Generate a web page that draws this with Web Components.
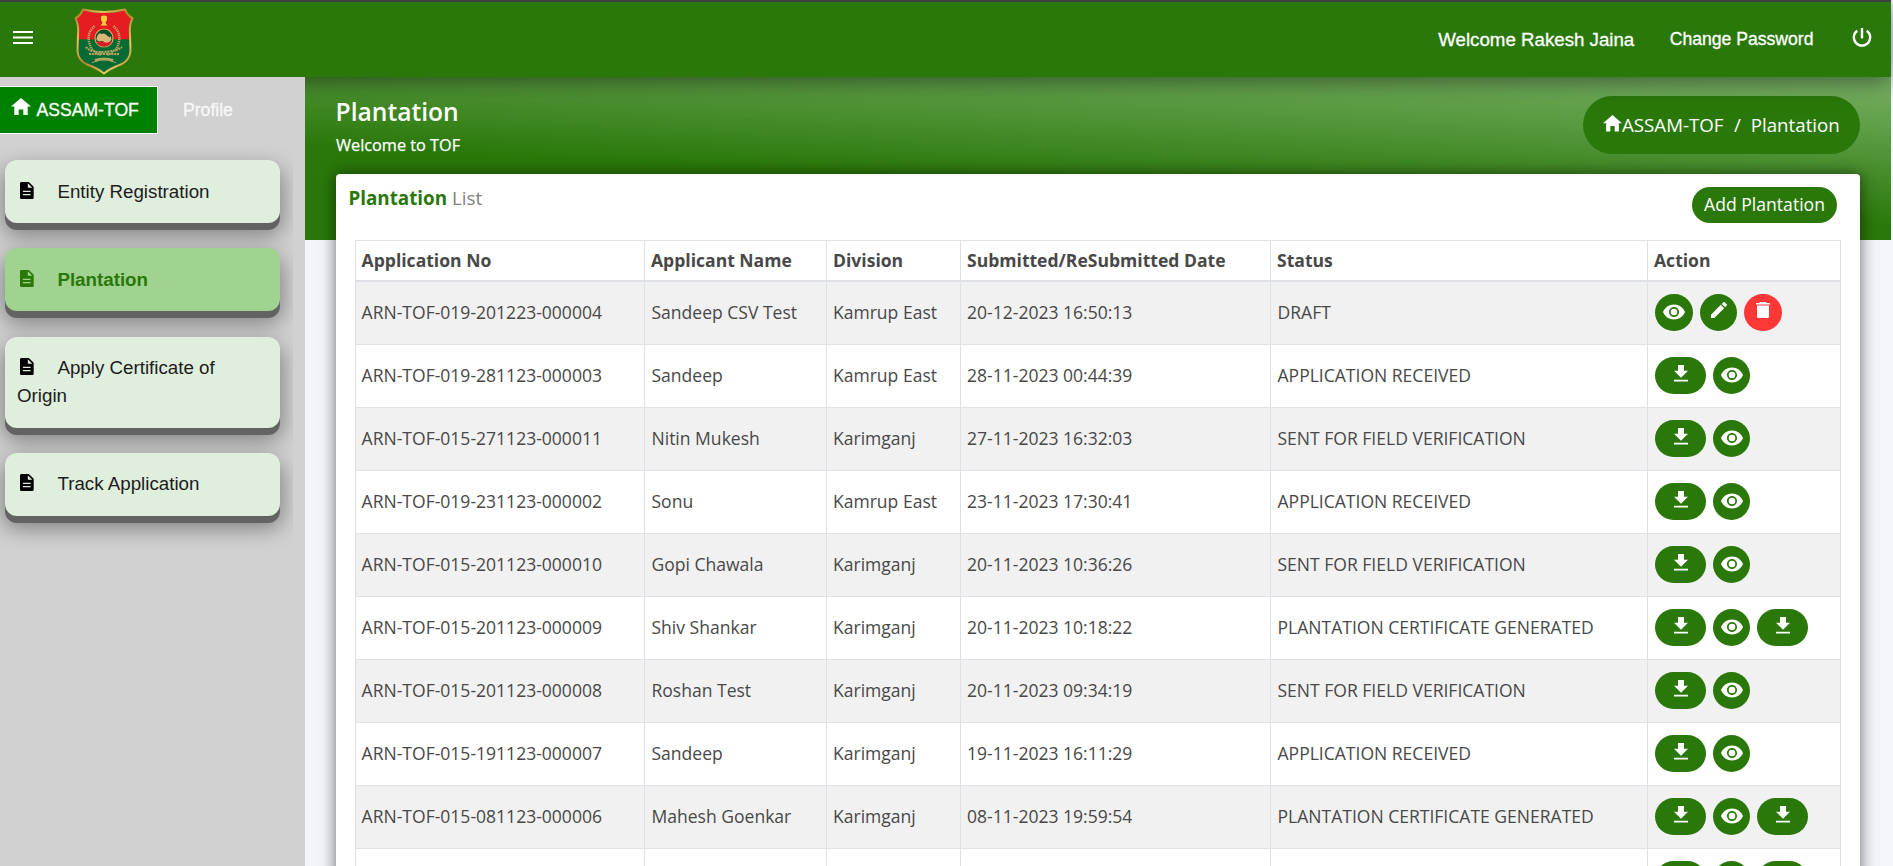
<!DOCTYPE html>
<html lang="en">
<head>
<meta charset="utf-8">
<title>Plantation</title>
<style>
html,body{margin:0;height:100%;overflow:hidden}
body{font-family:"Open Sans","Noto Sans",sans-serif;background:#f4f5fa;color:#484848;--green:#2a780a}
</style>
</head>
<body>
<tof-app></tof-app>
<script>
const UI = '"Liberation Sans",Arial,sans-serif';
const define = (name, css, html, setup) => customElements.define(name, class extends HTMLElement {
  connectedCallback() {
    if (this.shadowRoot) return;
    const root = this.attachShadow({mode: 'open'});
    root.innerHTML = `<style>*{box-sizing:border-box}${css}</style>` + (typeof html === 'function' ? html(this) : html);
    if (setup) setup(this, root);
  }
});

const ICONS = {
  home: ['0 0 20 17', '<path d="M7.7 17v-5.6h4.6V17h4.4V8.6H20L10 0 0 8.6h3.3V17z"/>'],
  menu: ['0 0 20 13', '<path d="M0 0h20v2H0zM0 5.5h20v2H0zM0 11h20v2H0z"/>'],
  doc: ['0 0 14 17', '<path fill-rule="evenodd" d="M1.6 0H9l5 4.8v10.6c0 1-.7 1.6-1.6 1.6H1.6C.7 17 0 16.400 0 15.400V1.600C0 .7.7 0 1.600 0zM8 1.300v4.400h4.600zM3 8.700V10h7.800V8.700zM3 12v1.300h7.800V12z"/>'],
  power: ['0 0 20 19', '<path d="M8.800 0h2.400v10.400H8.800z"/><path d="M5.300 2.700A8.200 8.200 0 1 0 14.700 2.700" fill="none" stroke="currentColor" stroke-width="2.300"/>'],
  eye: ['0 0 24 24', '<path fill-rule="evenodd" d="M12 4.500C7 4.500 2.730 7.610 1 12c1.730 4.390 6 7.500 11 7.500s9.270-3.110 11-7.500c-1.730-4.390-6-7.500-11-7.500zM12 17c-2.760 0-5-2.240-5-5s2.240-5 5-5 5 2.240 5 5-2.240 5-5 5zm0-8.300a3.300 3.300 0 1 0 0 6.600 3.300 3.300 0 0 0 0-6.600z"/>'],
  download: ['0 0 24 24', '<path d="M19 9h-4V3H9v6H5l7 7 7-7zM5 18v2h14v-2H5z"/>'],
  edit: ['3 3 18 18', '<path d="M3 17.250V21h3.750L17.810 9.940l-3.750-3.750L3 17.250zM20.710 7.040a1 1 0 0 0 0-1.410l-2.340-2.340a1 1 0 0 0-1.410 0l-1.830 1.830 3.750 3.750 1.830-1.830z"/>'],
  trash: ['0 0 14 16.400', '<path d="M4 0h6l.7.900H14v1.500H0V.900h3.300zM1 3.600h12v10.900c0 1.100-.8 1.900-1.900 1.900H2.900C1.800 16.400 1 15.600 1 14.500z"/>']
};
define('tof-icon', ':host{display:inline-block;line-height:0}svg{display:block;width:100%;height:100%;fill:currentColor}',
  el => { const [vb, p] = ICONS[el.getAttribute('name')]; return `<svg viewBox="${vb}" preserveAspectRatio="none">${p}</svg>`; });

define('tof-crest', ':host{display:block;width:60px;height:67px}svg{display:block;width:100%;height:100%}', `
<svg viewBox="0 0 60 67">
  <defs>
    <linearGradient id="gold" x1="0" x2="1" y1="0" y2="1"><stop offset="0" stop-color="#a8741c"/><stop offset=".25" stop-color="#e3c062"/><stop offset=".5" stop-color="#b4832a"/><stop offset=".75" stop-color="#e8c96a"/><stop offset="1" stop-color="#9c6c1c"/></linearGradient>
    <clipPath id="sh"><path d="M9.500 2.500Q30 7.500 50.500 2.500Q52.500 8 57.300 10.500Q54 17 55 27L55.500 43Q55 51 47 55.500Q35 60 30 64.500Q25 60 13 55.500Q5 51 4.500 43L5 27Q6 17 2.700 10.500Q7.500 8 9.500 2.500Z"/></clipPath>
  </defs>
  <g clip-path="url(#sh)"><path fill="#e61c22" d="M0 0h60v31.500H0z"/><path fill="#066a34" d="M0 31.500h60V67H0z"/></g>
  <path fill="none" stroke="url(#gold)" stroke-width="2" stroke-linejoin="round" d="M9 1.500Q30 6.500 51 1.500Q53.500 7.500 58.500 10.200Q55 17 56 27L56.500 43Q56 51.500 48 56Q35 61 30 65.500Q25 61 12 56Q4 51.500 3.500 43L4 27Q5 17 1.500 10.200Q6.500 7.500 9 1.500Z"/>
  <path fill="#f2cf3c" d="M27 8.500q3-2 6 0v4l-1.200 1v2l1.700 2h-7l1.700-2v-2l-1.200-1z"/>
  <circle cx="30" cy="30" r="9" fill="#064f2c" stroke="#d9ab5c" stroke-width="1.200"/>
  <path fill="#d7202a" d="M22 33.500h16q-2.500 5-8 5t-8-5z"/>
  <path fill="#d9b877" d="M22.500 32q0-5 3.500-7l1 1q4-1.500 6 1.500l3 2 .7-2 .8 4-2 2.500-4 .7-3-1.700h-2l-1 .4z"/>
  <path fill="none" stroke="#c2a25c" stroke-width="2.400" stroke-dasharray="1.300 .8" d="M20.500 18Q9.500 28 19 43M39.500 18Q50.500 28 41 43"/>
  <path fill="none" stroke="#b3a45e" stroke-width="2.200" stroke-dasharray="2 .8" d="M12 39q5 6 18 5t18-5M15 46h30"/>
  <path fill="none" stroke="#b3a45e" stroke-width="1.200" d="M20 42l4 5M40 42l-4 5M26 43v5M34 43v5"/>
  <path fill="none" stroke="#b3a45e" stroke-width="3" d="M21 52.500q9-3 18 0"/><path stroke="#b3a45e" d="M18 54.500l5-1.500M42 54.500L37 53"/>
</svg>`);

define('tof-header', `
:host{display:flex;align-items:flex-start;height:77px;width:1891px;border-top:2px solid #403f44;background:var(--green);color:#fff;position:relative;z-index:2;box-shadow:0 4px 22px rgba(0,0,0,.5);font-family:${UI};-webkit-text-stroke:.3px #fff;line-height:22px;box-sizing:border-box}
.menu{width:20px;height:13px;margin:29px 0 0 13px}
tof-crest{margin:6px 0 0 41px}
.user{margin:27px 0 0 auto;font-size:18.700px;white-space:nowrap}
.pw{margin:26px 0 0 35.500px;font-size:17.600px;white-space:nowrap}
.pow{width:20px;height:19px;margin:26px 19px 0 38.500px}`, `
<tof-icon class="menu" name="menu"></tof-icon><tof-crest></tof-crest>
<span class="user">Welcome Rakesh Jaina</span><span class="pw">Change Password</span><tof-icon class="pow" name="power"></tof-icon>`);

define('tof-nav-item', `
:host{display:block;padding:17.500px 11px 17.500px 12px;border-radius:12px;background:#e0eedd;color:#1c1c1c;font:18.750px/28px ${UI};box-shadow:0 7px 0 #636363,0 10px 22px 2px rgba(0,0,0,.4)}
:host([active]){background:#9fd38f;color:var(--green);font-weight:700}
tof-icon{width:13.700px;height:17px;margin:0 23.500px 0 3.200px;vertical-align:-1px;color:#000}
:host([active]) tof-icon{color:var(--green)}`, '<tof-icon name="doc"></tof-icon><slot></slot>');

define('tof-sidebar', `
:host{display:block;width:305px;height:789px;background:#d1d1d1;font-family:${UI};padding-top:9px;box-sizing:border-box}
.tabs{display:flex;height:48px;font-size:17.600px;line-height:46px;color:#f8f8f8;-webkit-text-stroke:.3px currentColor}
.on{display:flex;width:158px;background:#008000;border:1px solid #fff;border-left:0;color:#fff}
.on tof-icon{width:20px;height:17px;margin:11px 5.500px 0 11px}
.on,.off{white-space:nowrap}.off{margin-left:25px;line-height:48px}
nav{display:flex;flex-direction:column;gap:25.300px;width:293px;padding:26px 13px 60px 5px;overflow:hidden}`, `
<div class="tabs"><span class="on"><tof-icon name="home"></tof-icon>ASSAM-TOF</span><span class="off">Profile</span></div>
<nav><tof-nav-item>Entity Registration</tof-nav-item><tof-nav-item active>Plantation</tof-nav-item><tof-nav-item>Apply Certificate of Origin</tof-nav-item><tof-nav-item>Track Application</tof-nav-item></nav>`);

define('tof-breadcrumb', `
:host{display:flex;width:277px;height:58px;border-radius:29px;background:var(--green);color:#fff;font-size:18.700px;line-height:58px;padding-left:20px;white-space:nowrap;box-sizing:border-box}
tof-icon{width:19px;height:16.500px;margin-top:19px}
.sep{margin:0 10px 0 10.500px}`, '<tof-icon name="home"></tof-icon><span>ASSAM-TOF</span><span class="sep">/</span><span>Plantation</span>');

define('tof-action', `
:host{display:flex;width:37px;height:37px;border-radius:18.500px;background:var(--green);color:#fff;justify-content:center}
:host([kind=download]){width:51px}:host([wide]){width:38px}
:host([kind=trash]){background:#ff3737;width:38px}
tof-icon{width:24px;height:24px;margin-top:5.500px}
.download{margin-top:4.500px;height:23.500px}.edit{width:16px;height:16px;margin-top:8px}.trash{width:14px;height:16.400px;margin-top:8px}`,
  el => `<tof-icon class="${el.getAttribute('kind')}" name="${el.getAttribute('kind')}"></tof-icon>`);

const GRID = 'display:grid;grid-template-columns:289px 182px 134px 310px 377px 194px;';
define('tof-row', `
:host{${GRID}height:63px;border-bottom:1px solid #dee2e6;background:#fff;font-size:17.550px;line-height:24px;box-sizing:border-box}
:host([striped]){background:#f1f1f1}
div{border-left:1px solid #dee2e6;padding:18px 0 0 6.500px;white-space:nowrap}
div:first-of-type{padding-left:5.600px}
div:nth-of-type(3),div:nth-of-type(4){padding-left:6px}
.act{display:flex;gap:7px;padding:12px 0 0 7px;border-right:1px solid #dee2e6}`,
  el => el.cells.map(c => `<div>${c}</div>`).join('') +
    `<div class="act">${el.actions.map((a, i) => `<tof-action kind="${a}"${i === 0 && a === 'eye' ? ' wide' : ''}></tof-action>`).join('')}</div>`);

const V = ['download', 'eye'], C = ['download', 'eye', 'download'];
const REC = 'APPLICATION RECEIVED', SENT = 'SENT FOR FIELD VERIFICATION', GEN = 'PLANTATION CERTIFICATE GENERATED';
const ROWS = [
  ['ARN-TOF-019-201223-000004', 'Sandeep CSV Test', 'Kamrup East', '20-12-2023 16:50:13', 'DRAFT', ['eye', 'edit', 'trash']],
  ['ARN-TOF-019-281123-000003', 'Sandeep', 'Kamrup East', '28-11-2023 00:44:39', REC, V],
  ['ARN-TOF-015-271123-000011', 'Nitin Mukesh', 'Karimganj', '27-11-2023 16:32:03', SENT, V],
  ['ARN-TOF-019-231123-000002', 'Sonu', 'Kamrup East', '23-11-2023 17:30:41', REC, V],
  ['ARN-TOF-015-201123-000010', 'Gopi Chawala', 'Karimganj', '20-11-2023 10:36:26', SENT, V],
  ['ARN-TOF-015-201123-000009', 'Shiv Shankar', 'Karimganj', '20-11-2023 10:18:22', GEN, C],
  ['ARN-TOF-015-201123-000008', 'Roshan Test', 'Karimganj', '20-11-2023 09:34:19', SENT, V],
  ['ARN-TOF-015-191123-000007', 'Sandeep', 'Karimganj', '19-11-2023 16:11:29', REC, V],
  ['ARN-TOF-015-081123-000006', 'Mahesh Goenkar', 'Karimganj', '08-11-2023 19:59:54', GEN, C],
  ['', '', '', '', '', C]
];
define('tof-table', `
:host{display:block;width:1486px}
.head{${GRID}height:42px;border-top:1px solid #dee2e6;border-bottom:2px solid #dee2e6;font-size:17.560px;font-weight:700;line-height:39px}
.head span{border-left:1px solid #dee2e6;padding-left:6px}.head span:first-child{padding-left:5.600px}.head span:last-child{border-right:1px solid #dee2e6}`,
  `<div class="head"><span>Application No</span><span>Applicant Name</span><span>Division</span><span>Submitted/ReSubmitted Date</span><span>Status</span><span>Action</span></div><section></section>`,
  (el, root) => ROWS.forEach((r, i) => {
    const row = document.createElement('tof-row');
    row.cells = r.slice(0, 5); row.actions = r[5];
    if (i % 2 === 0) row.setAttribute('striped', '');
    root.querySelector('section').append(row);
  }));

define('tof-card', `
:host{display:block;width:1524px;height:760px;background:#fff;border-radius:4px;box-shadow:0 1px 15px 1px rgba(0,0,0,.52);box-sizing:border-box}
.top{display:flex;justify-content:space-between;height:66px;padding:0 23px 0 12.500px}
h2{margin:11px 0 0;font-size:18.800px;line-height:26px;font-weight:400;color:#808080}b{color:var(--green)}
button{width:145px;height:36px;margin-top:13px;border:0;border-radius:18px;padding:0 0 2px;background:var(--green);color:#fff;font:17.600px/34px "Open Sans",sans-serif}
tof-table{margin-left:19px}`, '<div class="top"><h2><b>Plantation</b> List</h2><button>Add Plantation</button></div><tof-table></tof-table>');

define('tof-main', `
:host{display:block;width:1586px;height:789px;overflow:hidden;padding:0 31px;box-sizing:border-box;background:linear-gradient(182.900deg,#7ab368 0,#2a780a 61%) 0 0/100% 163px no-repeat,#f4f5fa}
.hero{display:flex;justify-content:space-between;height:97px;color:#fff}
h1{margin:18px 0 0 -.500px;font-size:24.640px;font-weight:600;line-height:34px}
p{margin:5px 0 0;font-size:16.280px;line-height:22px;-webkit-text-stroke:.25px #fff}
tof-breadcrumb{margin-top:19px}`, '<div class="hero"><div><h1>Plantation</h1><p>Welcome to TOF</p></div><tof-breadcrumb></tof-breadcrumb></div><tof-card></tof-card>');

define('tof-app', ':host{display:block}.body{display:flex}tof-sidebar{position:relative;z-index:3}', '<tof-header></tof-header><div class="body"><tof-sidebar></tof-sidebar><tof-main></tof-main></div>');
</script>
</body>
</html>
